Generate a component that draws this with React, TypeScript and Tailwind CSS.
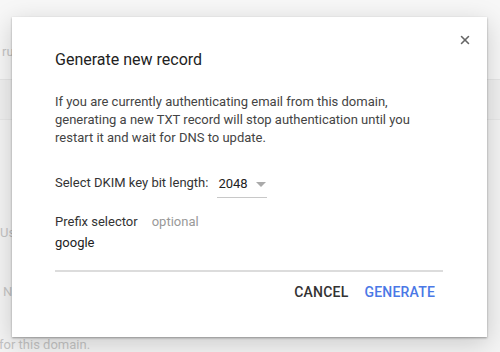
import { X } from "lucide-react";

export default function App() {
  return (
    <div
      className="relative w-[500px] h-[352px] overflow-hidden bg-[#f4f4f4] text-[13px]"
      style={{ fontFamily: "Roboto, 'Liberation Sans', sans-serif" }}
    >
      {/* page behind the dialog */}
      <div className="flex flex-col text-[#c4c4c4]">
        <div className="h-[80px] pt-[42px] pl-[2px] border-b border-[#e6e6e6] bg-[#f7f7f7]">rules</div>
        <div className="h-[40px] border-b border-[#e8e8e8] bg-[#f0f0f0]" />
        <div className="h-[104px] pt-[103px] pl-0">Use DKIM</div>
        <div className="h-[60px] pt-[58px] pl-[3px]">NAME</div>
        <div className="pt-[51px] -ml-[1px]">for this domain.</div>
      </div>

      {/* dialog */}
      <div className="absolute left-[12px] top-[17px] w-[475px] h-[320px] bg-white shadow-[0_1px_2px_rgba(0,0,0,0.35),0_6px_24px_rgba(0,0,0,0.18)] text-[#3c3c3c]">
        <button className="absolute right-[15px] top-[16px] text-[#666]">
          <X size={14} strokeWidth={2.6} />
        </button>
        <div className="flex flex-col pl-[43px] pr-[44px] pt-[31px]">
          <h2 className="text-[16px] leading-[24px] text-[#222]">Generate new record</h2>
          <p className="mt-[21px] leading-[18px] text-[#444]">
            If you are currently authenticating email from this domain,
            <br />
            generating a new TXT record will stop authentication until you
            <br />
            restart it and wait for DNS to update.
          </p>
          <div className="mt-[23px] flex items-start">
            <span className="pt-[3px] text-[#333]">Select DKIM key bit length:</span>
            <div className="ml-[9px] flex items-center w-[50px] h-[28px] border-b border-[#c8c8c8] pl-[1px]">
              <span className="text-[#222]">2048</span>
              <span className="ml-[8px] mt-[1px] w-0 h-0 border-l-[5px] border-r-[5px] border-t-[5px] border-l-transparent border-r-transparent border-t-[#aaa]" />
            </div>
          </div>
          <div className="mt-[14px] flex items-center">
            <span className="text-[#333]">Prefix selector</span>
            <span className="ml-[14px] text-[#999]">optional</span>
          </div>
          <div className="mt-[1px] h-[39px] border-b-2 border-[#dcdcdc] text-[#222]">google</div>
          <div className="mt-[10px] flex justify-end items-center gap-[16px] pr-[8px] text-[14px] font-medium tracking-[0.2px]">
            <button className="text-[#333]">CANCEL</button>
            <button className="text-[#4a78e6]">GENERATE</button>
          </div>
        </div>
      </div>
    </div>
  );
}
